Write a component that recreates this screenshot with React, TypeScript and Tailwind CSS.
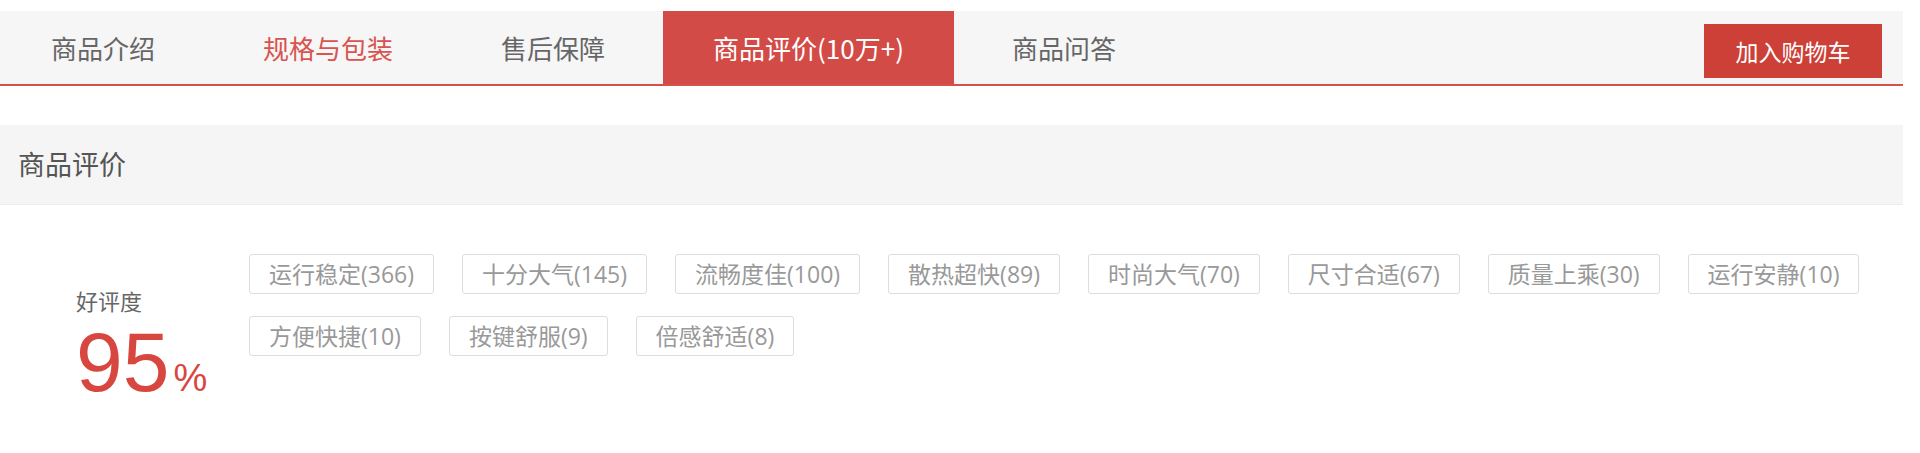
import React from 'react';

const tabs = [
  { label: '商品介绍', state: 'normal' },
  { label: '规格与包装', state: 'hover' },
  { label: '售后保障', state: 'normal' },
  { label: '商品评价(10万+)', state: 'active' },
  { label: '商品问答', state: 'normal' },
];

const tags = [
  '运行稳定(366)',
  '十分大气(145)',
  '流畅度佳(100)',
  '散热超快(89)',
  '时尚大气(70)',
  '尺寸合适(67)',
  '质量上乘(30)',
  '运行安静(10)',
  '方便快捷(10)',
  '按键舒服(9)',
  '倍感舒适(8)',
];

export default function App() {
  return (
    <div className="w-[1903px] bg-white pt-[11px] font-['Noto_Sans_CJK_SC',sans-serif]">
      {/* Tab bar */}
      <div className="flex h-[75px] bg-[#f6f6f6] border-b-2 border-[#d4514c] pl-px pr-[21px]">
        <div className="flex gap-2">
          {tabs.map((t) => (
            <div
              key={t.label}
              className={
                t.state === 'active'
                  ? 'flex items-center px-[50px] text-[26px] bg-[#d34b46] text-white'
                  : t.state === 'hover'
                  ? 'flex items-center px-[50px] text-[26px] text-[#d9534f]'
                  : 'flex items-center px-[50px] text-[26px] text-[#666]'
              }
            >
              {t.label}
            </div>
          ))}
        </div>
        <button className="ml-auto mt-[13px] h-[54px] w-[178px] bg-[#cc4038] text-white text-[23px]">
          加入购物车
        </button>
      </div>

      {/* Section header */}
      <div className="mt-[39px] h-[80px] bg-[#f5f5f5] border-b border-[#ececec] flex items-center pl-[18px] text-[27px] text-[#555]">
        商品评价
      </div>

      {/* Body */}
      <div className="flex pt-[49px] pb-[40px]">
        <div className="w-[249px] shrink-0 pl-[76px] pt-[35px]">
          <div className="text-[22px] leading-[22px] text-[#666]">好评度</div>
          <div className="mt-[9px] flex items-baseline text-[#d8473f] font-['Liberation_Sans',sans-serif]">
            <span className="text-[84px] leading-none">95</span>
            <span className="text-[38px] leading-none ml-[4px]">%</span>
          </div>
        </div>
        <div className="flex flex-wrap content-start gap-x-[28px] gap-y-[22px] pr-[20px]">
          {tags.map((tag) => (
            <div
              key={tag}
              className="h-[40px] flex items-center px-[19px] border border-[#ddd] rounded-[3px] text-[23px] text-[#999] font-['Open_Sans','Noto_Sans_CJK_SC',sans-serif]"
            >
              {tag}
            </div>
          ))}
        </div>
      </div>
    </div>
  );
}
